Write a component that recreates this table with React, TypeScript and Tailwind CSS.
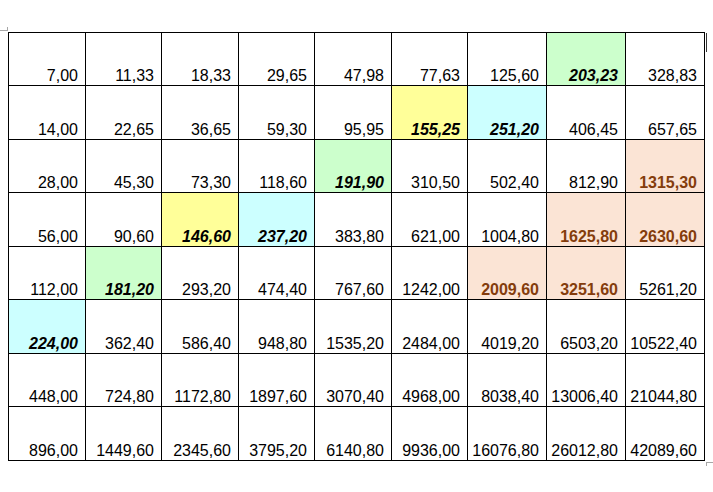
type Tone = "green" | "cyan" | "yellow" | "peach" | undefined;

interface Cell {
  v: string;
  tone?: Tone;
}

const g = (v: string): Cell => ({ v, tone: "green" });
const c = (v: string): Cell => ({ v, tone: "cyan" });
const y = (v: string): Cell => ({ v, tone: "yellow" });
const p = (v: string): Cell => ({ v, tone: "peach" });
const n = (v: string): Cell => ({ v });

const ROWS: Cell[][] = [
  [n("7,00"), n("11,33"), n("18,33"), n("29,65"), n("47,98"), n("77,63"), n("125,60"), g("203,23"), n("328,83")],
  [n("14,00"), n("22,65"), n("36,65"), n("59,30"), n("95,95"), y("155,25"), c("251,20"), n("406,45"), n("657,65")],
  [n("28,00"), n("45,30"), n("73,30"), n("118,60"), g("191,90"), n("310,50"), n("502,40"), n("812,90"), p("1315,30")],
  [n("56,00"), n("90,60"), y("146,60"), c("237,20"), n("383,80"), n("621,00"), n("1004,80"), p("1625,80"), p("2630,60")],
  [n("112,00"), g("181,20"), n("293,20"), n("474,40"), n("767,60"), n("1242,00"), p("2009,60"), p("3251,60"), n("5261,20")],
  [c("224,00"), n("362,40"), n("586,40"), n("948,80"), n("1535,20"), n("2484,00"), n("4019,20"), n("6503,20"), n("10522,40")],
  [n("448,00"), n("724,80"), n("1172,80"), n("1897,60"), n("3070,40"), n("4968,00"), n("8038,40"), n("13006,40"), n("21044,80")],
  [n("896,00"), n("1449,60"), n("2345,60"), n("3795,20"), n("6140,80"), n("9936,00"), n("16076,80"), n("26012,80"), n("42089,60")],
];

const TONE_STYLES: Record<string, string> = {
  green: "bg-[#ccffcc] font-bold italic text-black",
  cyan: "bg-[#ccffff] font-bold italic text-black",
  yellow: "bg-[#ffff99] font-bold italic text-black",
  peach: "bg-[#fbe4d5] font-bold text-[#843c0c]",
};

export default function App() {
  return (
    <div
      className="relative w-[713px] h-[492px] bg-white overflow-hidden"
      style={{ fontFamily: '"Liberation Sans", Arial, sans-serif' }}
    >
      {/* page corner marks */}
      <div className="absolute left-0 top-[30px] w-[8px] h-px bg-[#a6a6a6]" />
      <div className="absolute left-[7px] top-[27px] w-px h-[4px] bg-[#a6a6a6]" />
      <div className="absolute left-[706px] top-[33px] w-px h-[19px] bg-[#333]" />
      <div className="absolute left-[706px] top-[462px] w-[7px] h-px bg-[#a6a6a6]" />
      <div className="absolute left-[706px] top-[462px] w-px h-[4px] bg-[#a6a6a6]" />

      <div className="pt-[32px] pl-[8px]">
        <div className="grid grid-cols-[77px_76px_77px_76px_77px_76px_79px_79px_79px] w-fit border-l border-t border-black">
          {ROWS.map((row, ri) =>
            row.map((cell, ci) => (
              <div
                key={`${ri}-${ci}`}
                className={`flex items-end justify-end border-r border-b border-black pr-[7px] text-[16px] leading-none ${
                  ri % 2 === 0 ? "h-[53px]" : "h-[54px]"
                } ${cell.tone ? TONE_STYLES[cell.tone] : "text-black"}`}
              >
                <span className="pb-[1px]">{cell.v}</span>
              </div>
            ))
          )}
        </div>
      </div>
    </div>
  );
}
